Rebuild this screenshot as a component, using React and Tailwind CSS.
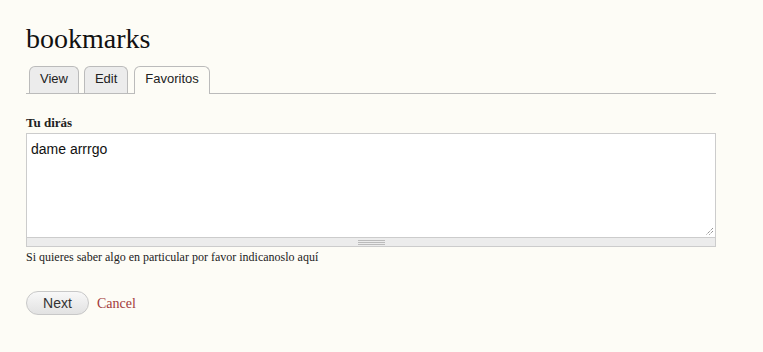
export default function App() {
  const tabs = [
    { label: "View", active: false },
    { label: "Edit", active: false },
    { label: "Favoritos", active: true },
  ];

  return (
    <div className="min-h-[352px] w-full bg-[#fdfcf6] px-[26px] pt-[22px] text-[#222] [font-family:'Liberation_Serif',serif]">
      <div className="w-[690px]">
        {/* Title */}
        <h1 className="text-[28px] leading-[34px] text-[#111]">bookmarks</h1>

        {/* Tabs */}
        <div className="mt-[10px] flex items-end gap-[5px] border-b border-[#bbb] pl-[3px]">
          {tabs.map((t) => (
            <div
              key={t.label}
              className={
                t.active
                  ? "-mb-px ml-[1px] h-[28px] rounded-t-[6px] border border-b-0 border-[#bbb] bg-[#fdfcf6] px-[10px] pt-[4px] text-[13px] leading-[16px] text-[#222] [font-family:'Liberation_Sans',sans-serif]"
                  : "h-[27px] rounded-t-[6px] border border-b-0 border-[#bbb] bg-[#ececec] px-[10px] pt-[4px] text-[13px] leading-[16px] text-[#222] [font-family:'Liberation_Sans',sans-serif]"
              }
            >
              {t.label}
            </div>
          ))}
        </div>

        {/* Form */}
        <div className="mt-[22px]">
          <label className="block text-[13px] font-bold leading-[14px] text-[#222]">Tu dirás</label>
          <div className="mt-[3px] border border-[#ccc]">
            <div className="relative h-[103px] bg-white px-[4px] pt-[6px] text-[14px] leading-[18px] text-[#111] [font-family:'Liberation_Sans',sans-serif]">
              dame arrrgo
              <svg className="absolute bottom-[1px] right-[1px]" width="9" height="9" viewBox="0 0 9 9">
                <path d="M8 1 L1 8 M8 4 L4 8" stroke="#666" strokeWidth="1" strokeDasharray="1 1" />
              </svg>
            </div>
            <div className="flex h-[9px] items-center justify-center border-t border-[#ccc] bg-[#ececec]">
              <div className="flex w-[27px] flex-col gap-[1px]">
                <div className="h-px bg-[#bbb]" />
                <div className="h-px bg-[#bbb]" />
                <div className="h-px bg-[#bbb]" />
              </div>
            </div>
          </div>
          <p className="mt-[2px] text-[12px] leading-[16px] text-[#222]">
            Si quieres saber algo en particular por favor indicanoslo aquí
          </p>
        </div>

        {/* Actions */}
        <div className="mt-[26px] flex items-center gap-[8px]">
          <button className="h-[24px] w-[63px] rounded-full border border-[#c8c8c8] bg-linear-to-b from-[#f8f8f8] to-[#e2e2e2] text-[14px] text-[#333] [font-family:'Liberation_Sans',sans-serif]">
            Next
          </button>
          <a href="#" className="text-[14px] text-[#a33b3b]">Cancel</a>
        </div>
      </div>
    </div>
  );
}
